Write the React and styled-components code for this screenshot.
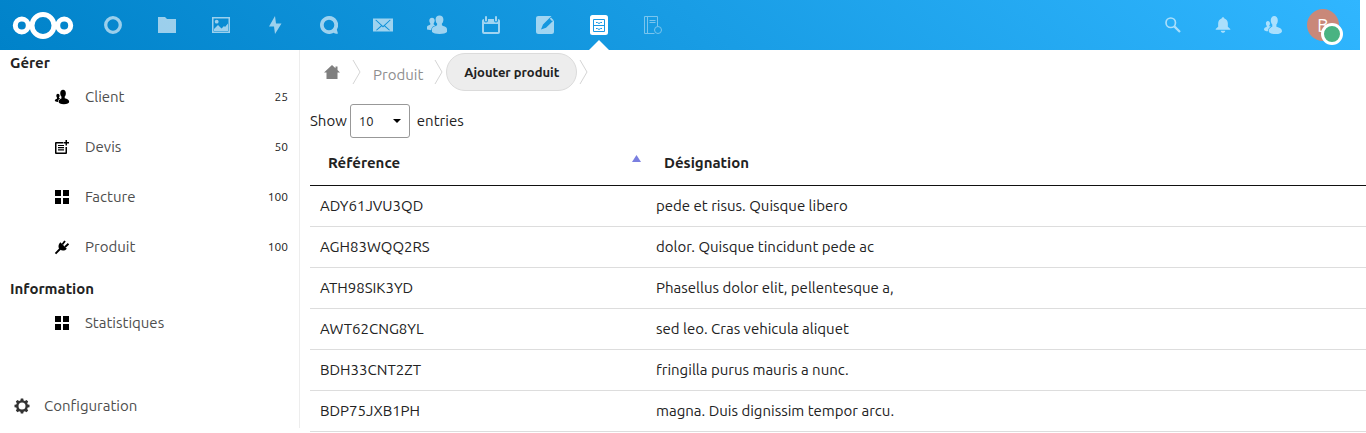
import React from "react";
import styled, { createGlobalStyle } from "styled-components";

const Global = createGlobalStyle`
  *, *::before, *::after { box-sizing: border-box; }
  body {
    margin: 0;
    background: #fff;
    color: #222;
    font: 15px/20px Ubuntu, "Noto Sans", "Open Sans", sans-serif;
    overflow: hidden;
  }
  a { color: inherit; text-decoration: none; }
`;

const Page = styled.div`
  display: flex;
  flex-direction: column;
  height: 100vh;
`;

const Header = styled.header`
  display: flex;
  align-items: center;
  justify-content: space-between;
  flex: none;
  height: 50px;
  margin-right: 6px;
  padding: 0 12px;
  background: linear-gradient(40deg, #0082c9 0%, #30b6ff 100%);
  color: #fff;
`;

const Apps = styled.nav`
  display: flex;
  align-items: center;
`;

const Logo = styled.a`
  display: flex;
  width: 74px;
`;

const AppLink = styled.a`
  display: flex;
  align-items: center;
  justify-content: center;
  position: relative;
  width: 54px;
  height: 50px;
  svg { opacity: ${(p) => (p.$active ? 1 : 0.6)}; }
  &::after {
    content: "";
    display: ${(p) => (p.$active ? "block" : "none")};
    position: absolute;
    bottom: 0;
    left: 17px;
    border: 10px solid transparent;
    border-top-width: 0;
    border-bottom-color: #fff;
  }
`;

const Tools = styled.div`
  display: flex;
`;

const ToolButton = styled.button`
  display: flex;
  align-items: center;
  justify-content: center;
  width: 50px;
  height: 50px;
  padding: 0;
  border: 0;
  background: none;
  color: #fff;
  font: inherit;
  > svg { opacity: 0.6; }
`;

const Avatar = styled.span`
  position: relative;
  width: 32px;
  height: 32px;
  border-radius: 50%;
  background: #c98879;
  font-size: 18px;
  line-height: 32px;
`;

const Status = styled.span`
  position: absolute;
  right: -4px;
  bottom: -4px;
  width: 22px;
  height: 22px;
  border: 3px solid #fff;
  border-radius: 50%;
  background: #49b382;
`;

const Body = styled.div`
  display: flex;
  flex: 1;
  min-height: 0;
`;

const Sidebar = styled.aside`
  display: flex;
  flex-direction: column;
  flex: none;
  width: 300px;
  margin-bottom: 5px;
  border-right: 1px solid #ededed;
`;

const SectionTitle = styled.h2`
  margin: 0;
  padding: 4px 10px 0;
  font-size: 15px;
  line-height: 18px;
`;

const NavList = styled.ul`
  margin: 0;
  padding: 0 0 4px;
  list-style: none;
`;

const NavLink = styled.a`
  display: flex;
  align-items: center;
  height: 50px;
  padding: 0 11px 0 54px;
  color: #4e4e4e;
  svg { margin-right: 15px; color: #000; }
`;

const Count = styled.span`
  margin-left: auto;
  color: #222;
  font-size: 12px;
`;

const Settings = styled.button`
  display: flex;
  align-items: center;
  gap: 14px;
  height: 44px;
  margin-top: auto;
  padding: 0 14px;
  border: 0;
  background: none;
  color: #4e4e4e;
  font: inherit;
  svg { color: #333; }
`;

const Main = styled.main`
  flex: 1;
  min-width: 0;
  overflow: hidden;
  padding-left: 10px;
`;

const Crumbs = styled.nav`
  display: flex;
  align-items: center;
  height: 44px;
  padding-left: 14px;
`;

const Crumb = styled.a`
  display: flex;
  color: ${(p) => (p.$icon ? "#7f7f7f" : "#8e8e8e")};
  padding: ${(p) => (p.$icon ? "0 12px 0 0" : "5px 11px 0 11px")};
`;

const AddButton = styled.button`
  height: 38px;
  margin: 0 2px;
  padding: 0 17px;
  border: 1px solid #dbdbdb;
  border-radius: 19px;
  background: #ededed;
  color: #222;
  font: bold 13px/20px Ubuntu, "Noto Sans", sans-serif;
`;

const Length = styled.label`
  display: flex;
  align-items: center;
  height: 34px;
  margin: 10px 0 6px;
`;

const SelectBox = styled.span`
  display: flex;
  align-items: center;
  position: relative;
  margin: 0 7px 0 3px;
  svg { position: absolute; right: 9px; pointer-events: none; }
`;

const Select = styled.select`
  appearance: none;
  width: 60px;
  height: 34px;
  padding: 0 8px;
  border: 1px solid #989898;
  border-radius: 3px;
  background: #fff;
  color: #222;
  font: 13px Ubuntu, "Noto Sans", sans-serif;
`;

const Table = styled.table`
  width: 100%;
  min-width: 1056px;
  table-layout: fixed;
  border-collapse: separate;
  border-spacing: 0;
`;

const Th = styled.th`
  width: ${(p) => p.$width || "auto"};
  height: 42px;
  padding: 0 8px 4px 18px;
  border-bottom: 1px solid #111;
  font-size: 15px;
  text-align: left;
`;

const HeadCell = styled.span`
  display: flex;
  justify-content: space-between;
  svg { margin: 2px -3px 0 0; }
`;

const Td = styled.td`
  height: 41px;
  padding: 0 10px;
  border-bottom: 1px solid #ddd;
`;

const Svg = ({ s = 18, h, box = "0 0 16 16", children }) => (
  <svg width={s} height={h || s} viewBox={box} fill="currentColor" aria-hidden="true">{children}</svg>
);

const Grid = () => (
  <Svg s={16}><path d="M1 1h6v6H1zM9 1h6v6H9zM1 9h6v6H1zM9 9h6v6H9z" /></Svg>
);
const People = ({ s }) => (
  <Svg s={s} box="-1 -1 20 20">
    <path d="M10.300 0C8.200 0 6.800 1.700 6.800 4.200c0 1.800.6 3.300 1.500 4.300v2.300c-2 .7-3.600 1.900-3.600 3.900C4.700 17 7.300 18 11.300 18s6.700-1 6.700-3.100c0-2.300-2.400-3.400-5.600-4.200V8.500c.9-1 1.400-2.500 1.400-4.300C13.800 1.700 12.400 0 10.300 0z" />
    <path d="M3.900 5C2.700 5 1.900 6 1.900 7.400c0 1 .3 1.800.8 2.300v1.400C1.200 11.500 0 12.200 0 13.500c0 1.200 1.500 1.700 4 1.800 0-2 .9-3.600 3-4.700L5.200 10.300v-.6c.5-.5.8-1.300.8-2.300C6 6 5.100 5 3.900 5z" />
  </Svg>
);
const Contacts = () => (
  <Svg s={20} box="0 0 20 20">
    <path d="M12.500.5c-2.300 0-3.900 1.600-3.900 3.900 0 1.800.6 3.300 1.500 4.100v1.700c-1 1-5.100 1-5.100 4v2.900C6.200 18.400 9 19 12.500 19s6.500-.6 7.500-1.900v-2.900c0-3-4.100-3-5.100-4V8.500c.9-.8 1.500-2.300 1.500-4.100 0-2.300-1.600-3.900-3.900-3.900z" />
    <path d="M5 2.700C3.400 2.700 2.300 3.900 2.300 5.500c0 1.200.4 2.200 1 2.800v1.200c-.7.700-3.300.800-3.300 2.800v2c.8.600 2.200.9 4.300.9 0-3.200 2.300-4 4.300-4.900-.7-.2-1.600-.5-1.900-.8V8.300c.6-.6 1-1.600 1-2.800C7.700 3.900 6.600 2.700 5 2.700z" />
  </Svg>
);

const apps = [
  ["Tableau de bord", <Svg box="0 0 18 18"><circle cx="9" cy="9" r="7.300" fill="none" stroke="currentColor" strokeWidth="3.300" /></Svg>],
  ["Fichiers", <Svg box="0 0 18 18"><path d="M0 1h7l2 2h9v14H0z" /></Svg>],
  ["Photos", <Svg box="0 0 18 18"><path fillRule="evenodd" d="M0 1h18v16H0zM1.500 2.500v13h15v-13z" /><circle cx="4.700" cy="5.700" r="1.900" /><path d="M2 15v-2l4-4 3.500 3.500L12 10l1 1 3-3.500V15z" /></Svg>],
  ["Activité", <Svg s={18} box="0 0 18 18"><path d="M9 0 3 10.500h5l1 7.500 6.500-10.500h-5.500z" /></Svg>],
  ["Discussion", <Svg box="0 0 18 18"><path fillRule="evenodd" d="M9 0a9 9 0 1 0 4.700 16.700c1 .8 2.800 1.300 4 1 .5-.6-.7-2.500-.8-4.200A9 9 0 0 0 9 0zm0 3.700a5.300 5.300 0 1 1 0 10.600A5.300 5.300 0 0 1 9 3.700z" /></Svg>],
  ["Courriel", <Svg s={20} h={14} box="0 0 20 14"><path fillRule="evenodd" d="M0 .5h20v13H0zM2.200 2 8 7.500 3 12l.8.500 5-4.200L10 9.400l1.200-1.100 5 4.200.8-.500-5-4.500L17.800 2l-1-.300L10 7.900 3.200 1.700z" /></Svg>],
  ["Contacts", <Contacts />],
  ["Agenda", <Svg box="0 0 18 18"><path fillRule="evenodd" d="M2 3v1.500a2 2 0 0 0 4 0V3h6v1.500a2 2 0 0 0 4 0V3c1.200 0 2 .8 2 2v11a2 2 0 0 1-2 2H2a2 2 0 0 1-2-2V5c0-1.200.8-2 2-2zm0 5v8h14V8z" /><rect x="3" width="2" height="5.500" rx="1" /><rect x="13" width="2" height="5.500" rx="1" /></Svg>],
  ["Notes", <Svg box="0 0 18 18"><path fillRule="evenodd" d="M2.500 0h13L13 2.500 7 8.500 5 13.500l5-1.700L17 5l1-1v11.500a2.500 2.500 0 0 1-2.500 2.500h-13A2.500 2.500 0 0 1 0 15.500v-13A2.500 2.500 0 0 1 2.500 0z" /><path d="m13.800 2.800 1.200-1.200 2.400 2.400-1.200 1.200z" /></Svg>],
  ["Gestion", <Svg s={18} h={20} box="0 0 18 20"><rect width="18" height="20" rx="2.500" /><g fill="none" stroke="#1a98e4"><path d="M3.500 4.500h11v12h-11zM3.500 10.500h11" /><path d="M6 7.500h1.500l.5.700h2l.5-.7H12M6 13.500h1.500l.5.700h2l.5-.7H12" /></g></Svg>],
  ["Carnet", <Svg s={18} box="0 0 18 18"><g fill="none" stroke="currentColor" opacity=".7"><path d="M10.500 17.500H.5V.5h13v10M3.500.5v17" /><circle cx="14" cy="14" r="3.500" /><path d="M5.500 4.500h6M5.500 6.500h6" /></g></Svg>],
];

const sections = [
  ["Gérer", [
    ["Client", "25", <People s={16} />],
    ["Devis", "50", <Svg s={16}><path fillRule="evenodd" d="M2 3h7v1.500H2.500v9h9V8H13v6a1 1 0 0 1-1 1H2a1 1 0 0 1-1-1V4a1 1 0 0 1 1-1z" /><path d="M4 6h6v1H4zM4 8h6v1.200H4zM4 10.300h6v1.200H4zM11.500 1H13v2h2v1.500h-2v2h-1.500v-2h-2V3h2z" /></Svg>],
    ["Facture", "100", <Grid />],
    ["Produit", "100", <Svg s={16}><path d="M6.300 3.200 12.800 9.700c-1.400 1.800-4 2.400-6.300 1.400L5 9.700C3.900 7.500 4.600 4.800 6.300 3.200z" /><path d="m1.500 14.700 4.500-4.700M8.300 5.500 11 2M11 8l3.500-3.200" fill="none" stroke="currentColor" strokeWidth="1.900" /></Svg>],
  ]],
  ["Information", [["Statistiques", "", <Grid />]]],
];

const rows = [
  ["ADY61JVU3QD", "pede et risus. Quisque libero"],
  ["AGH83WQQ2RS", "dolor. Quisque tincidunt pede ac"],
  ["ATH98SIK3YD", "Phasellus dolor elit, pellentesque a,"],
  ["AWT62CNG8YL", "sed leo. Cras vehicula aliquet"],
  ["BDH33CNT2ZT", "fringilla purus mauris a nunc."],
  ["BDP75JXB1PH", "magna. Duis dignissim tempor arcu."],
];

const Chevron = () => (
  <svg width="10" height="26" viewBox="0 0 10 26" fill="none" stroke="#d5d5d5" aria-hidden="true"><path d="m1 1 7 12-7 12" /></svg>
);

export default function App() {
  return (
    <Page>
      <Global />
      <Header>
        <Apps aria-label="Applications">
          <Logo href="#" aria-label="Accueil">
            <svg width="62" height="28" viewBox="0 0 62 28" fill="none" stroke="#fff" strokeWidth="5" aria-hidden="true">
              <circle cx="31" cy="14.500" r="11" />
              <circle cx="9.800" cy="14.500" r="6.500" />
              <circle cx="52.200" cy="14.500" r="6.500" />
            </svg>
          </Logo>
          {apps.map(([name, icon]) => (
            <AppLink key={name} href="#" aria-label={name} $active={name === "Gestion"}>{icon}</AppLink>
          ))}
        </Apps>
        <Tools>
          <ToolButton aria-label="Rechercher">
            <Svg><g fill="none" stroke="currentColor"><circle cx="6" cy="6" r="4.200" strokeWidth="1.500" /><path d="m9.200 9.200 5 5" strokeWidth="2" /></g></Svg>
          </ToolButton>
          <ToolButton aria-label="Notifications">
            <Svg><path d="M8 1c-.7 0-1.200.5-1.200 1.200C4.900 2.800 3.700 4.500 3.700 6.500v3L1.500 11.500v.7h13v-.7l-2.200-2v-3c0-2-1.200-3.700-3.100-4.300C9.200 1.500 8.700 1 8 1zM6 13.200h4c0 1-.9 1.800-2 1.800s-2-.8-2-1.800z" /></Svg>
          </ToolButton>
          <ToolButton aria-label="Contacts"><People s={20} /></ToolButton>
          <ToolButton aria-label="Compte"><Avatar>B<Status /></Avatar></ToolButton>
        </Tools>
      </Header>
      <Body>
        <Sidebar>
          {sections.map(([title, items]) => (
            <React.Fragment key={title}>
              <SectionTitle>{title}</SectionTitle>
              <NavList>
                {items.map(([name, count, icon]) => (
                  <li key={name}>
                    <NavLink href="#">{icon}{name}{count && <Count>{count}</Count>}</NavLink>
                  </li>
                ))}
              </NavList>
            </React.Fragment>
          ))}
          <Settings>
            <Svg s={16}><path fillRule="evenodd" d="M6.800.5h2.400l.4 1.900 1.300.5 1.600-1 1.700 1.700-1 1.600.5 1.300 1.800.3v2.400l-1.800.4-.5 1.300 1 1.600-1.700 1.700-1.600-1-1.300.5-.4 1.800H6.800l-.4-1.800-1.300-.5-1.600 1-1.700-1.700 1-1.600-.5-1.300-1.800-.4V6.800l1.800-.3.5-1.300-1-1.600 1.700-1.700 1.600 1 1.300-.5zM8 4.500a3.500 3.500 0 1 0 0 7 3.500 3.500 0 0 0 0-7z" /></Svg>
            Configuration
          </Settings>
        </Sidebar>
        <Main>
          <Crumbs aria-label="Fil d'Ariane">
            <Crumb href="#" $icon aria-label="Accueil"><Svg s={16}><path d="M8 1 0 8.500h2.500V15h11V8.500H16l-2.500-2.400V2.500h-2v1.800z" /></Svg></Crumb>
            <Chevron />
            <Crumb href="#">Produit</Crumb>
            <Chevron />
            <AddButton>Ajouter produit</AddButton>
            <Chevron />
          </Crumbs>
          <Length>
            Show
            <SelectBox>
              <Select defaultValue="10"><option>10</option><option>25</option><option>50</option></Select>
              <svg width="8" height="4" viewBox="0 0 8 4" aria-hidden="true"><path d="M0 0h8L4 4z" /></svg>
            </SelectBox>
            entries
          </Length>
          <Table>
            <thead>
              <tr>
                <Th $width="336px" scope="col" aria-sort="ascending">
                  <HeadCell>Référence<svg width="9" height="7" viewBox="0 0 9 7" aria-hidden="true"><path d="M4.500 0 9 7H0z" fill="#7a7fe0" /></svg></HeadCell>
                </Th>
                <Th scope="col">Désignation</Th>
              </tr>
            </thead>
            <tbody>
              {rows.map(([ref, name]) => (
                <tr key={ref}><Td>{ref}</Td><Td>{name}</Td></tr>
              ))}
            </tbody>
          </Table>
        </Main>
      </Body>
    </Page>
  );
}
